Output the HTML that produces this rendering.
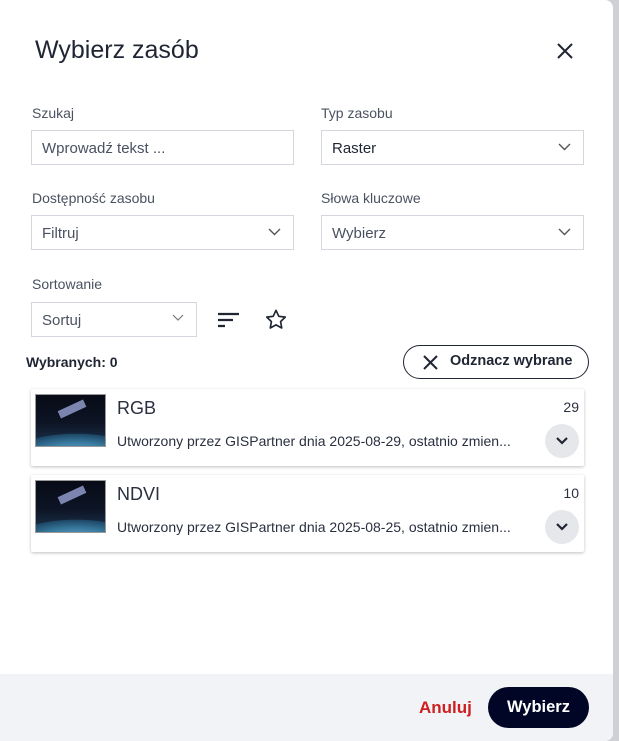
<!DOCTYPE html>
<html><head><meta charset="utf-8"><style>
*{box-sizing:border-box;margin:0;padding:0}
body{width:619px;height:741px;background:#cfd0d6;font-family:"Liberation Sans",sans-serif;position:relative;overflow:hidden;color:#1f2533}
.dlg{position:absolute;left:0;top:0;width:613px;height:741px;background:#fff;border-radius:0 8px 8px 0;overflow:hidden}
.a{position:absolute}
.lbl{font-size:14px;color:#4a5160}
.in{position:absolute;border:1px solid #d4d7dd;background:#fff;height:35px;font-size:15px;color:#4a5160;padding:9px 10px}
.in.dark{color:#1f2533}
.chev{position:absolute;right:12px;top:12px}
.card{position:absolute;left:31px;width:553px;height:77px;background:#fff;box-shadow:0 1px 3px rgba(0,0,0,.25);border-radius:2px}
.thumb{position:absolute;left:4px;top:5px;width:71px;height:53px;background:radial-gradient(ellipse 90px 30px at 40px 60px,#6fa3c0 0%,#3b7ea3 40%,#1d4766 70%,transparent 72%),linear-gradient(180deg,#070b16 0%,#0d1424 55%,#1c3550 100%);border:1px solid #999}
.thumb::after{content:"";position:absolute;left:22px;top:10px;width:28px;height:8px;background:#7b85b0;transform:rotate(-25deg)}
.ttl{position:absolute;left:86px;top:9px;font-size:18px;color:#2a3040}
.num{position:absolute;right:5px;top:10px;font-size:14px;color:#2a3040}
.desc{position:absolute;left:86px;top:44px;font-size:14px;color:#2a3040;white-space:nowrap}
.cb{position:absolute;right:5px;top:35px;width:34px;height:34px;border-radius:50%;background:#e5e7eb}
</style></head><body>
<div class="dlg">
<div class="a" style="left:35px;top:36px;font-size:25px;color:#1f2533">Wybierz zasób</div>
<svg class="a" style="left:557px;top:43px" width="16" height="16" viewBox="0 0 16 16"><path d="M1 1L15 15M15 1L1 15" stroke="#1f2533" stroke-width="2"/></svg>

<div class="a lbl" style="left:32px;top:105px">Szukaj</div>
<div class="in" style="left:31px;top:130px;width:263px">Wprowadź tekst ...</div>
<div class="a lbl" style="left:321px;top:105px">Typ zasobu</div>
<div class="in dark" style="left:321px;top:130px;width:263px">Raster<svg class="chev" width="13" height="8" viewBox="0 0 13 8"><path d="M1 1l5.5 5.5L12 1" fill="none" stroke="#555" stroke-width="1.4"/></svg></div>

<div class="a lbl" style="left:32px;top:190px">Dostępność zasobu</div>
<div class="in" style="left:31px;top:215px;width:263px">Filtruj<svg class="chev" width="13" height="8" viewBox="0 0 13 8"><path d="M1 1l5.5 5.5L12 1" fill="none" stroke="#555" stroke-width="1.4"/></svg></div>
<div class="a lbl" style="left:321px;top:190px">Słowa kluczowe</div>
<div class="in" style="left:321px;top:215px;width:263px">Wybierz<svg class="chev" width="13" height="8" viewBox="0 0 13 8"><path d="M1 1l5.5 5.5L12 1" fill="none" stroke="#555" stroke-width="1.4"/></svg></div>

<div class="a lbl" style="left:32px;top:276px">Sortowanie</div>
<div class="in" style="left:31px;top:302px;width:166px">Sortuj<svg class="chev" style="top:11px" width="12" height="7" viewBox="0 0 12 7"><path d="M1 1l5 5 5-5" fill="none" stroke="#777" stroke-width="1.2"/></svg></div>
<svg class="a" style="left:218px;top:312px" width="22" height="16" viewBox="0 0 22 16"><path d="M0 2h21M0 8h15M0 14h7" stroke="#1f2533" stroke-width="2.2"/></svg>
<svg class="a" style="left:265px;top:309px" width="22" height="21" viewBox="0 0 24 23"><path d="M12 1.5l3.1 6.5 7 .9-5.1 4.9 1.3 7-6.3-3.4-6.3 3.4 1.3-7L1.9 8.9l7-.9z" fill="none" stroke="#1f2533" stroke-width="1.8" stroke-linejoin="round"/></svg>

<div class="a" style="left:26px;top:354px;font-size:14px;font-weight:bold;color:#1f2533">Wybranych: 0</div>
<div class="a" style="left:403px;top:345px;width:186px;height:34px;border:1px solid #1f2533;border-radius:17px;font-size:14.5px;font-weight:bold;padding:7px 0 0 46px;color:#1f2533;white-space:nowrap">Odznacz wybrane</div>
<svg class="a" style="left:423px;top:355px" width="15" height="15" viewBox="0 0 15 15"><path d="M1 1l13 13M14 1L1 14" stroke="#1f2533" stroke-width="2"/></svg>

<div class="card" style="top:389px"><div class="thumb"></div><div class="ttl">RGB</div><div class="num">29</div><div class="desc">Utworzony przez GISPartner dnia 2025-08-29, ostatnio zmien...</div><div class="cb"><svg style="position:absolute;left:11px;top:13px" width="12" height="8" viewBox="0 0 12 8"><path d="M1 1l5 5 5-5" fill="none" stroke="#1f2533" stroke-width="2.2"/></svg></div></div>
<div class="card" style="top:475px"><div class="thumb"></div><div class="ttl">NDVI</div><div class="num">10</div><div class="desc">Utworzony przez GISPartner dnia 2025-08-25, ostatnio zmien...</div><div class="cb"><svg style="position:absolute;left:11px;top:13px" width="12" height="8" viewBox="0 0 12 8"><path d="M1 1l5 5 5-5" fill="none" stroke="#1f2533" stroke-width="2.2"/></svg></div></div>

<div class="a" style="left:0;top:674px;width:613px;height:67px;background:#f2f3f6"></div>
<div class="a" style="left:419px;top:698px;font-size:17px;font-weight:bold;color:#cc1f1f">Anuluj</div>
<div class="a" style="left:488px;top:687px;width:101px;height:41px;border-radius:21px;background:#020626;color:#fff;font-size:16.5px;font-weight:bold;text-align:center;line-height:41px">Wybierz</div>
</div>
</body></html>
